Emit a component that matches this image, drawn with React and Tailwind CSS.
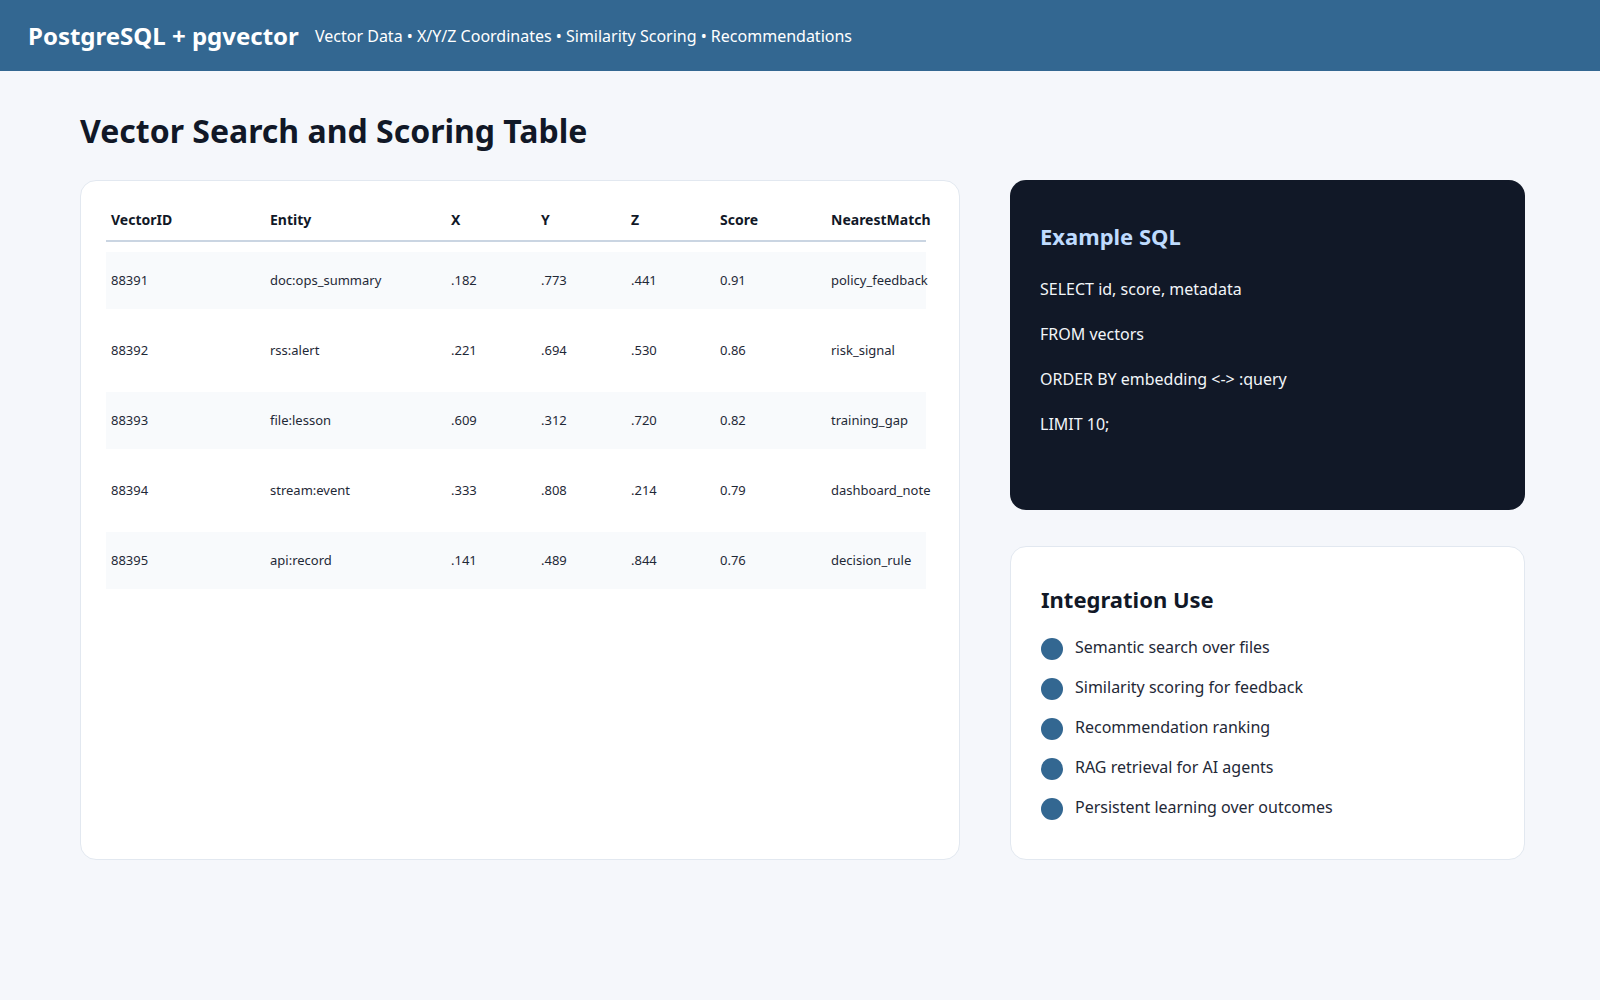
const rows = [
  ['88391', 'doc:ops_summary', '.182', '.773', '.441', '0.91', 'policy_feedback'],
  ['88392', 'rss:alert', '.221', '.694', '.530', '0.86', 'risk_signal'],
  ['88393', 'file:lesson', '.609', '.312', '.720', '0.82', 'training_gap'],
  ['88394', 'stream:event', '.333', '.808', '.214', '0.79', 'dashboard_note'],
  ['88395', 'api:record', '.141', '.489', '.844', '0.76', 'decision_rule'],
]
const heads = ['VectorID', 'Entity', 'X', 'Y', 'Z', 'Score', 'NearestMatch']
const widths = ['w-[159px]', 'w-[181px]', 'w-[90px]', 'w-[90px]', 'w-[89px]', 'w-[111px]', 'w-[100px]']
const uses = [
  'Semantic search over files',
  'Similarity scoring for feedback',
  'Recommendation ranking',
  'RAG retrieval for AI agents',
  'Persistent learning over outcomes',
]

export default function App() {
  return (
    <div className="min-h-[1000px] bg-[#f5f7fb] font-['DejaVu_Sans',sans-serif]">
      <header className="h-[71px] bg-[#336791] flex items-center px-7 text-white">
        <div className="w-[287px] whitespace-nowrap text-[24px] font-bold">PostgreSQL + pgvector</div>
        <div className="text-[16px] whitespace-nowrap">Vector Data • X/Y/Z Coordinates • Similarity Scoring • Recommendations</div>
      </header>
      <main className="w-[1445px] ml-[80px] pt-[36px]">
        <h1 className="text-[32px] font-bold text-[#111827] mb-[25px]">Vector Search and Scoring Table</h1>
        <div className="grid grid-cols-[880px_515px] gap-[50px]">
          <div className="h-[680px] bg-white border border-slate-200 rounded-2xl p-[25px] pt-[28px]">
            <div className="w-[820px]">
              <div className="flex border-b-2 border-slate-300 pb-[10px] px-[5px]">
                {heads.map((h, i) => (
                  <div key={h} className={`${widths[i]} shrink-0 whitespace-nowrap text-[14px] font-bold text-[#111827]`}>{h}</div>
                ))}
              </div>
              <div className="flex flex-col gap-[13px] pt-[10px]">
                {rows.map((r, ri) => (
                  <div key={r[0]} className={`flex items-center h-[57px] px-[5px] ${ri % 2 === 0 ? 'bg-[#f8fafc]' : ''}`}>
                    {r.map((c, i) => (
                      <div key={i} className={`${widths[i]} shrink-0 whitespace-nowrap text-[13px] text-[#1f2937]`}>{c}</div>
                    ))}
                  </div>
                ))}
              </div>
            </div>
          </div>
          <div className="flex flex-col gap-[36px]">
            <div className="h-[330px] bg-[#111827] rounded-2xl p-[30px] pt-[40px] text-[#f1f5f9]">
              <h2 className="text-[22px] font-bold text-[#bfdbfe] mb-[24px]">Example SQL</h2>
              <div className="flex flex-col gap-[21px] text-[16px]">
                <div>SELECT id, score, metadata</div>
                <div>FROM vectors</div>
                <div>ORDER BY embedding &lt;-&gt; :query</div>
                <div>LIMIT 10;</div>
              </div>
            </div>
            <div className="h-[314px] bg-white border border-slate-200 rounded-2xl p-[30px] pt-[36px]">
              <h2 className="text-[22px] font-bold text-[#111827] mb-[18px]">Integration Use</h2>
              <ul className="flex flex-col gap-[14px]">
                {uses.map(u => (
                  <li key={u} className="flex items-center gap-[12px] text-[16px] text-[#1f2937]">
                    <span className="w-[22px] h-[22px] rounded-full bg-[#336791] shrink-0 mt-[4px]" />
                    {u}
                  </li>
                ))}
              </ul>
            </div>
          </div>
        </div>
      </main>
    </div>
  )
}
